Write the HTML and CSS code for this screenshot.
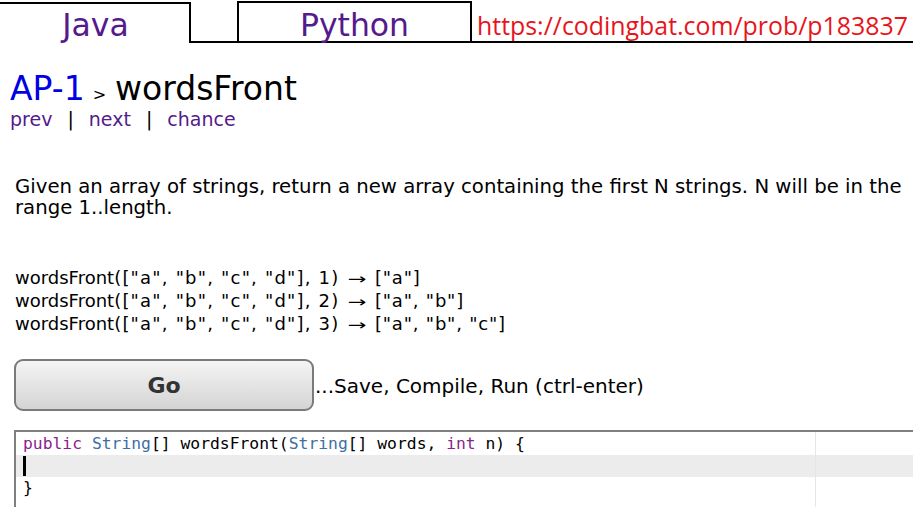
FILE: index.html
```html
<!DOCTYPE html>
<html>
<head>
<meta charset="utf-8">
<link rel="stylesheet" href="styles.css">
</head>
<body>
<div class="tabbar">
  <div class="tab tab-java"><a class="tab-link">Java</a></div>
  <div class="tab-gap"></div>
  <div class="tab tab-python"><a class="tab-link">Python</a></div>
  <div class="url">https://codingbat.com/prob/p183837</div>
</div>

<h1 class="title"><a class="crumb">AP-1</a><span class="sep">&gt;</span><span class="name">wordsFront</span></h1>
<div class="nav">
  <a class="nav-link">prev</a><span class="pipe">|</span><a class="nav-link">next</a><span class="pipe">|</span><a class="nav-link">chance</a>
</div>

<p class="desc">Given an array of strings, return a new array containing the first N strings. N will be in the range 1..length.</p>

<div class="examples">
  <div>wordsFront<span class="args">(["a", "b", "c", "d"], 1)</span> <span class="arrow">→</span> <span class="result">["a"]</span></div>
  <div>wordsFront<span class="args">(["a", "b", "c", "d"], 2)</span> <span class="arrow">→</span> <span class="result">["a", "b"]</span></div>
  <div>wordsFront<span class="args">(["a", "b", "c", "d"], 3)</span> <span class="arrow">→</span> <span class="result">["a", "b", "c"]</span></div>
</div>

<div class="run-row">
  <button class="go">Go</button>
  <span class="run-note">...Save, Compile, Run (ctrl-enter)</span>
</div>

<div class="editor">
  <div class="print-margin"></div>
  <div class="line"><span class="kw">public</span> <span class="ty">String</span>[] wordsFront(<span class="ty">String</span>[] words, <span class="kw">int</span> n) {</div>
  <div class="line active"><span class="cursor"></span></div>
  <div class="line">}</div>
  <div class="line"></div>
</div>
</body>
</html>
```

FILE: styles.css
```css
html, body {
  margin: 0;
  padding: 0;
  background: #fff;
  overflow: hidden;
}
body {
  font-family: "DejaVu Sans", Verdana, sans-serif;
  color: #000;
  width: 913px;
  height: 507px;
}

/* tabs */
.tabbar {
  display: flex;
  align-items: flex-end;
  height: 43px;
}
.tab {
  display: flex;
  justify-content: center;
  box-sizing: border-box;
}
.tab-link {
  font-size: 31.5px;
  line-height: 31px;
  color: #551a8b;
}
.tab-java {
  width: 191px;
  height: 41px;
  border-top: 2px solid #000;
  border-right: 2px solid #000;
  padding-top: 6px;
  padding-left: 2px;
}
.tab-gap {
  width: 46px;
  height: 2px;
  background: #000;
}
.tab-python {
  width: 235px;
  height: 42px;
  border: 2px solid #000;
  padding-top: 7px;
}
.url {
  flex: 1;
  align-self: stretch;
  display: flex;
  align-items: flex-end;
  border-bottom: 2px solid #000;
  padding-left: 5px;
  padding-bottom: 4px;
  font-family: "Open Sans", "Noto Sans", sans-serif;
  font-size: 24.9px;
  line-height: 24px;
  color: #e8141c;
  white-space: nowrap;
}

/* heading */
.title {
  margin: 30px 0 0 10px;
  font-size: 33px;
  line-height: 32px;
  font-weight: normal;
}
.crumb {
  color: #0000e6;
}
.sep {
  font-size: 16px;
  margin: 0 9px 0 8px;
}
.nav {
  margin: -1px 0 0 10px;
  font-size: 19px;
  line-height: 19px;
}
.nav-link {
  color: #551a8b;
}
.pipe {
  display: inline-block;
  margin: 0 15px;
  color: #000;
}

/* description */
.desc {
  margin: 47px 0 0 15px;
  width: 896px;
  font-size: 19.7px;
  line-height: 21px;
}

.examples {
  margin: 49px 0 0 15px;
  font-size: 18px;
  line-height: 21px;
}
.args {
  letter-spacing: 1.2px;
}
.result {
  letter-spacing: 0.8px;
}
.arrow {
  display: inline-block;
  width: 24px;
  font-size: 15px;
  transform: scaleX(1.5);
  text-align: center;
}

/* run */
.run-row {
  display: flex;
  align-items: center;
  margin: 23px 0 0 14px;
}
.go {
  width: 300px;
  height: 52px;
  box-sizing: border-box;
  border: 2px solid #7a7a7a;
  border-radius: 9px;
  background: linear-gradient(#f4f4f4, #d4d4d4);
  font-family: "DejaVu Sans", Verdana, sans-serif;
  font-weight: bold;
  font-size: 22px;
  color: #333;
  padding: 0;
}
.run-note {
  margin-left: 1px;
  font-size: 20px;
  line-height: 21px;
  padding-top: 2px;
}

/* editor */
.editor {
  position: relative;
  margin: 19px 0 0 14px;
  width: 1000px;
  height: 120px;
  border-top: 2px solid #7f7f7f;
  border-left: 2px solid #7f7f7f;
  padding-top: 1px;
  font-family: "DejaVu Sans Mono", "Liberation Mono", monospace;
  font-size: 16.35px;
}
.line {
  height: 22px;
  line-height: 22px;
  padding-left: 7px;
  white-space: pre;
  color: #000;
}
.line.active {
  background: #ececec;
}
.kw {
  color: #8a1f8e;
}
.ty {
  color: #3d6ea6;
}
.cursor {
  display: inline-block;
  width: 3px;
  height: 20px;
  margin-top: 1px;
  vertical-align: top;
  background: #000;
}
.print-margin {
  position: absolute;
  left: 799px;
  top: 0;
  bottom: 0;
  width: 1px;
  background: #e6e6e6;
}
```
